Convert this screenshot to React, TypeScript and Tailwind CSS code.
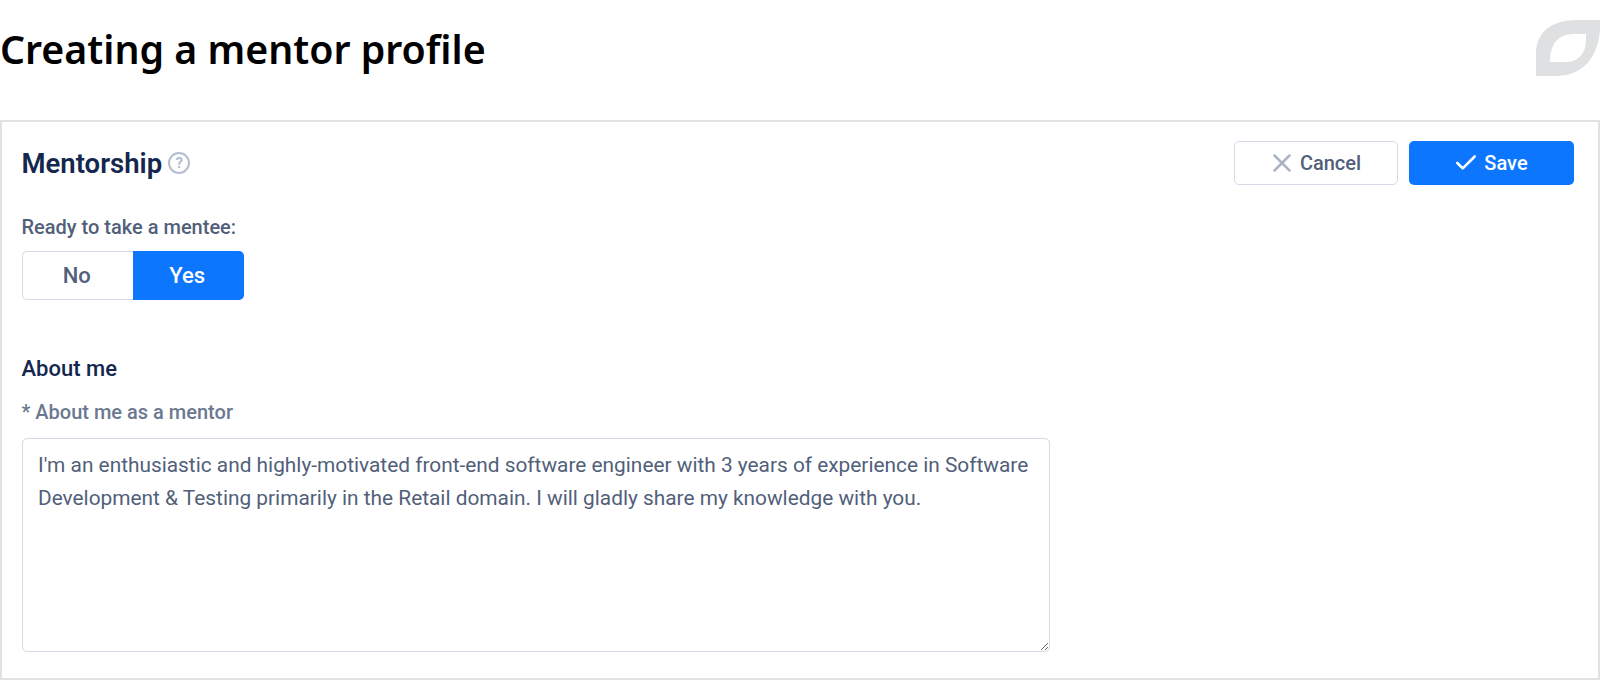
import { Check, X } from 'lucide-react'

function Logo() {
  return (
    <svg width="64" height="56" viewBox="0 0 64 56" className="block" aria-hidden>
      <path
        fillRule="evenodd"
        fill="#dfe0e2"
        d="M64 0 L64 10 C62 38 46 56 20 56 L0 56 L0 34 C0 12 16 0 40 0 Z M50 14 L38 14 C24 14 14 22 14 42 L30 42 C42 42 50 34 50 20 Z"
      />
    </svg>
  )
}

export default function App() {
  return (
    <div className="flex h-[680px] w-[1600px] flex-col overflow-hidden bg-white font-['Roboto',sans-serif]">
      <header className="flex h-[120px] items-start justify-between">
        <h1 className="mt-[23px] font-['Noto_Sans',sans-serif] text-[39.3px] font-semibold leading-[52px] text-black">
          Creating a mentor profile
        </h1>
        <div className="mt-5">
          <Logo />
        </div>
      </header>

      <section className="flex-1 border-2 border-[#e2e2e2] pl-[19.5px] pr-[24px] pt-[19px]">
        <div className="flex items-center justify-between">
          <div className="flex items-center gap-[6px]">
            <h2 className="mt-[2px] text-[27.5px] font-semibold leading-[32px] text-[#14274e]">Mentorship</h2>
            <span className="flex h-[22px] w-[22px] items-center justify-center rounded-full border-2 border-[#b4bed0] text-[15px] font-bold text-[#b4bed0]">
              ?
            </span>
          </div>
          <div className="flex gap-[11px]">
            <button
              type="button"
              className="flex h-11 w-[164px] items-center justify-center gap-[3px] rounded-[5px] border border-[#d3d9e6] bg-white pr-1 text-[20px] font-medium text-[#525f7a]"
            >
              <X size={30} strokeWidth={2} className="text-[#acb3c1]" />
              Cancel
            </button>
            <button
              type="button"
              className="flex h-11 w-[165px] items-center justify-center gap-[5px] rounded-[5px] bg-[#0c76ff] pr-[2px] text-[20px] font-medium text-white"
            >
              <Check size={26} strokeWidth={2.4} />
              Save
            </button>
          </div>
        </div>

        <p className="mt-[30px] text-[20px] font-medium leading-6 text-[#525f7a]">Ready to take a mentee:</p>
        <div className="mt-[12px] flex h-[49px] w-[222px]">
          <div className="flex flex-1 items-center justify-center rounded-l-[5px] border border-r-0 border-[#d3d9e6] pr-[2px] text-[22px] font-medium text-[#525f7a]">
            No
          </div>
          <div className="flex flex-1 items-center justify-center rounded-r-[5px] bg-[#0c76ff] pr-[2px] text-[22px] font-medium text-white">
            Yes
          </div>
        </div>

        <h3 className="mt-[55px] text-[22px] font-medium leading-7 text-[#14274e]">About me</h3>
        <p className="mt-[17px] text-[20px] font-medium leading-6 text-[#6b7890]">* About me as a mentor</p>
        <textarea
          className="mt-[14px] block h-[214px] w-[1028px] rounded-[5px] border border-[#d3d9e6] py-[10px] pl-[15.5px] pr-[14px] text-[20.85px] leading-[33px] text-[#525f7a] outline-none"
          defaultValue="I'm an enthusiastic and highly-motivated front-end software engineer with 3 years of experience in Software Development & Testing primarily in the Retail domain. I will gladly share my knowledge with you."
        />
      </section>
    </div>
  )
}
